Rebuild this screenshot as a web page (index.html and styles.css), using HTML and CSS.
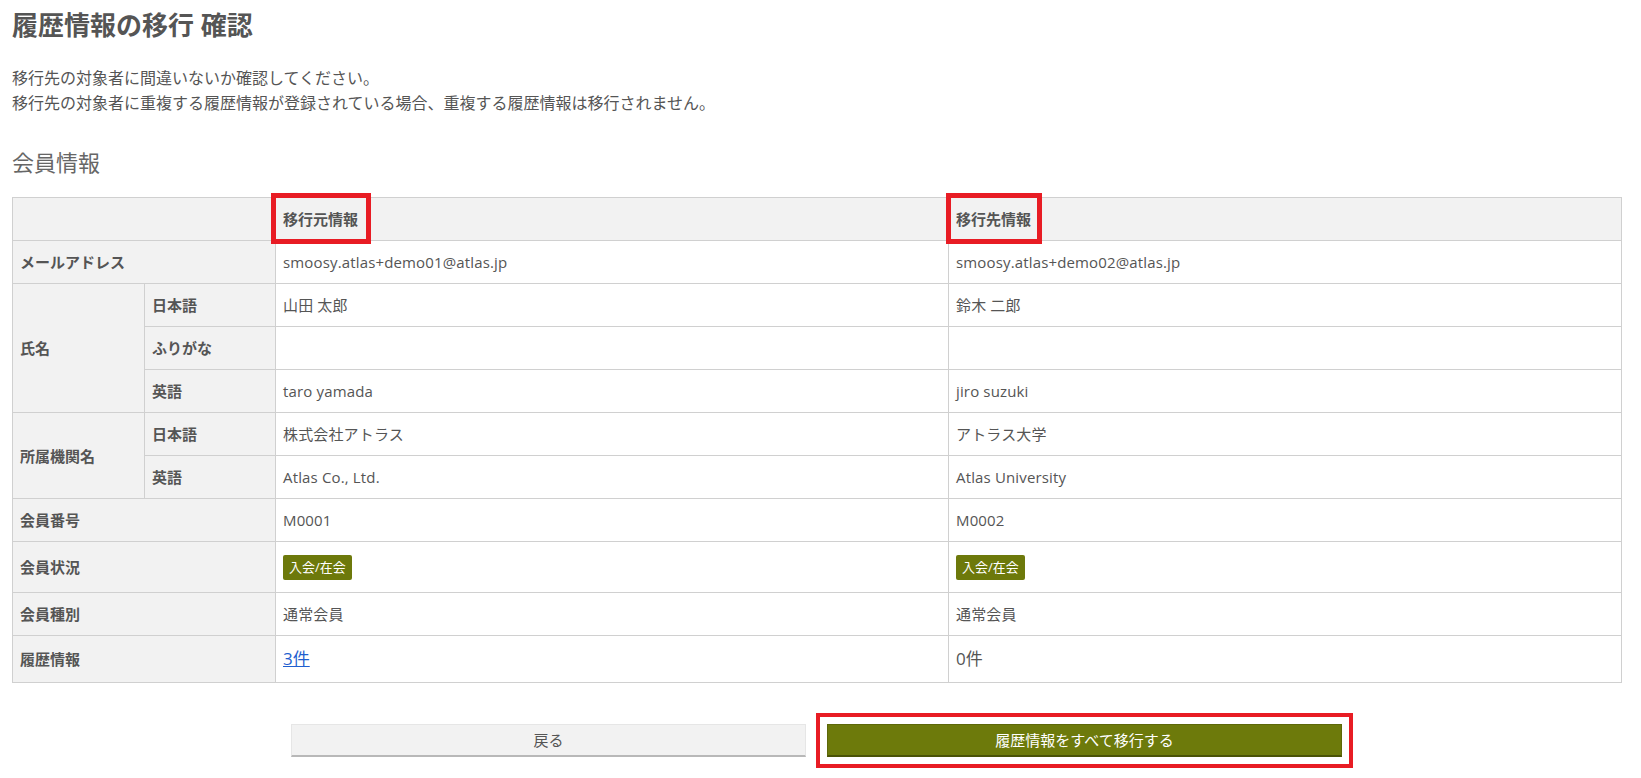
FILE: index.html
```html
<!DOCTYPE html>
<html lang="ja">
<head>
<meta charset="utf-8">
<title>履歴情報の移行 確認</title>
<link rel="stylesheet" href="styles.css">
</head>
<body>
<main class="page">
  <h1 class="title">履歴情報の移行 確認</h1>
  <p class="lead">移行先の対象者に間違いないか確認してください。<br>移行先の対象者に重複する履歴情報が登録されている場合、重複する履歴情報は移行されません。</p>
  <h2 class="section">会員情報</h2>
  <table class="info">
    <colgroup>
      <col class="c-label">
      <col class="c-sub">
      <col class="c-val">
      <col class="c-val">
    </colgroup>
    <thead>
      <tr>
        <th colspan="2"></th>
        <th><span class="mark mark-a">移行元情報</span></th>
        <th><span class="mark mark-b">移行先情報</span></th>
      </tr>
    </thead>
    <tbody>
      <tr>
        <th colspan="2">メールアドレス</th>
        <td>smoosy.atlas+demo01@atlas.jp</td>
        <td>smoosy.atlas+demo02@atlas.jp</td>
      </tr>
      <tr>
        <th rowspan="3">氏名</th>
        <th>日本語</th>
        <td>山田 太郎</td>
        <td>鈴木 二郎</td>
      </tr>
      <tr>
        <th>ふりがな</th>
        <td></td>
        <td></td>
      </tr>
      <tr>
        <th>英語</th>
        <td>taro yamada</td>
        <td>jiro suzuki</td>
      </tr>
      <tr>
        <th rowspan="2">所属機関名</th>
        <th>日本語</th>
        <td>株式会社アトラス</td>
        <td>アトラス大学</td>
      </tr>
      <tr>
        <th>英語</th>
        <td>Atlas Co., Ltd.</td>
        <td>Atlas University</td>
      </tr>
      <tr>
        <th colspan="2">会員番号</th>
        <td>M0001</td>
        <td>M0002</td>
      </tr>
      <tr>
        <th colspan="2">会員状況</th>
        <td><span class="badge">入会/在会</span></td>
        <td><span class="badge">入会/在会</span></td>
      </tr>
      <tr>
        <th colspan="2">会員種別</th>
        <td>通常会員</td>
        <td>通常会員</td>
      </tr>
      <tr class="row-count">
        <th colspan="2">履歴情報</th>
        <td><a class="count-link" href="#">3件</a></td>
        <td><span class="count">0件</span></td>
      </tr>
    </tbody>
  </table>
  <div class="actions">
    <button class="btn btn-back" type="button">戻る</button>
    <button class="btn btn-primary" type="button">履歴情報をすべて移行する</button>
  </div>
</main>
</body>
</html>
```

FILE: styles.css
```css
* { box-sizing: border-box; }

html, body {
  margin: 0;
  padding: 0;
  background: #ffffff;
}

body {
  font-family: "Open Sans", "Noto Sans CJK JP", sans-serif;
  color: #555555;
}

.page {
  padding: 0 20px 22px 12px;
}

.title {
  margin: 10px 0 0;
  font-size: 26px;
  line-height: 31px;
  font-weight: 700;
  color: #555555;
}

.lead {
  margin: 25px 0 0;
  font-size: 16px;
  line-height: 25px;
  color: #555555;
}

.section {
  margin: 31px 0 0;
  font-size: 22px;
  line-height: 30px;
  font-weight: 400;
  color: #666666;
}

.info {
  margin-top: 20px;
  width: 100%;
  border-collapse: collapse;
  table-layout: fixed;
  font-size: 15px;
  line-height: 22px;
}

.c-label { width: 132px; }
.c-sub { width: 131px; }
.c-val { width: 673px; }

.info th,
.info td {
  border: 1px solid #d0d0d0;
  padding: 10px 7px;
  text-align: left;
  vertical-align: middle;
  color: #555555;
}

.info th {
  background: #f2f2f2;
  font-weight: 700;
}

.info td {
  background: #ffffff;
  font-weight: 400;
  letter-spacing: 0.15px;
}

.mark {
  position: relative;
  display: inline-block;
  line-height: 20px;
}

.mark::after {
  content: "";
  position: absolute;
  top: -16px;
  bottom: -15px;
  left: -12px;
  right: -13px;
  border: 5px solid #e81c24;
}

.mark-b::after {
  left: -10px;
  right: -11px;
}

.badge {
  display: inline-block;
  margin: 3px 0 2px;
  padding: 3px 6px;
  font-size: 13px;
  line-height: 19px;
  letter-spacing: 0;
  color: #ffffff;
  background: #6d790b;
  border-radius: 2px;
}

.row-count td {
  font-size: 17px;
  line-height: 26px;
  letter-spacing: 0;
}

.count-link {
  color: #1f5fcf;
  text-decoration: underline;
}

.count {
  color: #555555;
}

.actions {
  margin-top: 41px;
  display: flex;
  justify-content: center;
  gap: 21px;
}

.btn {
  width: 515px;
  height: 33px;
  font-family: "Open Sans", "Noto Sans CJK JP", sans-serif;
  font-size: 15px;
  line-height: 20px;
  border-radius: 0;
  cursor: pointer;
}

.btn-back {
  background: #f2f2f2;
  color: #555555;
  border: 1px solid #e6e6e6;
  border-bottom: 2px solid #b8b8b8;
}

.btn-primary {
  background: #6d7a0b;
  color: #ffffff;
  border: 1px solid #5d6809;
  border-bottom: 2px solid #4a5306;
  box-shadow: 0 0 0 7px #ffffff, 0 0 0 11px #e81c24;
}
```
